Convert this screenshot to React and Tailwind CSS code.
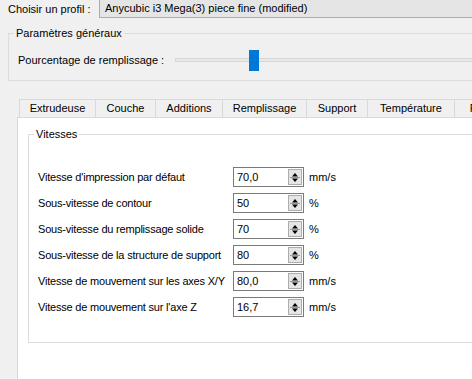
import React from 'react';

const rows = [
    { label: "Vitesse d'impression par défaut", value: '70,0', unit: 'mm/s' },
    { label: 'Sous-vitesse de contour', value: '50', unit: '%' },
    { label: 'Sous-vitesse du remplissage solide', value: '70', unit: '%' },
    { label: 'Sous-vitesse de la structure de support', value: '80', unit: '%' },
    { label: 'Vitesse de mouvement sur les axes X/Y', value: '80,0', unit: 'mm/s' },
    { label: "Vitesse de mouvement sur l'axe Z", value: '16,7', unit: 'mm/s' },
];

const tabs = [
    { name: 'Extrudeuse', w: 'w-[77px]' },
    { name: 'Couche', w: 'w-[60px]' },
    { name: 'Additions', w: 'w-[67px]' },
    { name: 'Remplissage', w: 'w-[84px]' },
    { name: 'Support', w: 'w-[61px]' },
    { name: 'Température', w: 'w-[87px]' },
    { name: 'Refroidissement', w: 'w-[110px]' },
];

function SpinBox({ value }) {
    return (
        <div className="flex h-[20px] w-[71px] items-center justify-between border border-[#7a7a7a] bg-white pl-[3px] pr-[1px]">
            <span className="leading-none">{value}</span>
            <div className="flex h-[16px] w-[14px] flex-col border border-[#acacac] bg-[#e5e5e5]">
                <svg width="12" height="14" viewBox="0 0 12 14">
                    <path d="M6 3 L9 6.5 L3 6.5 Z" fill="#000" />
                    <line x1="1" y1="7.5" x2="11" y2="7.5" stroke="#9a9a9a" />
                    <path d="M3 8.5 L9 8.5 L6 12 Z" fill="#000" />
                </svg>
            </div>
        </div>
    );
}

export default function App() {
    return (
        <div className="h-[379px] w-[472px] overflow-hidden whitespace-nowrap bg-[#f0f0f0] text-[11px] text-black font-['Liberation_Sans',Arial,sans-serif]">
            <div className="flex h-[18px] items-center">
                <span className="w-[99px] shrink-0 pl-[8px]">Choisir un profil :</span>
                <div className="flex h-[18px] flex-1 items-center border-b border-l border-[#adadad] bg-[#e5e5e5] pl-[5px]">
                    Anycubic i3 Mega(3) piece fine (modified)
                </div>
            </div>

            <div className="relative ml-[8px] mr-[-20px] mt-[15px] h-[48px] border border-[#dcdcdc]">
                <span className="absolute left-[5px] top-[-9px] bg-[#f0f0f0] px-[2px] leading-[16px]">Paramètres généraux</span>
                <div className="mt-[16px] flex h-[20px] items-center pl-[9px]">
                    <span className="w-[157px] shrink-0">Pourcentage de remplissage :</span>
                    <div className="relative h-[4px] flex-1 border border-[#d6d6d6] bg-[#e7eae9]">
                        <div className="absolute left-[73px] top-[-9px] h-[21px] w-[10px] bg-[#0078d7]" />
                    </div>
                </div>
            </div>

            <div className="mt-[18px] flex h-[18px] pl-[19px]">
                {tabs.map((t) => (
                    <div key={t.name} className={`${t.w} flex shrink-0 items-center justify-center border-r border-t border-[#d9d9d9] first:border-l`}>
                        {t.name}
                    </div>
                ))}
            </div>

            <div className="ml-[17px] h-[262px] border-l border-t border-[#d9d9d9] bg-white pl-[10px] pt-[16px]">
                <div className="relative mr-[-20px] h-[209px] border border-[#dcdcdc] pl-[9px] pt-[32px]">
                    <span className="absolute left-[5px] top-[-9px] bg-white px-[2px] leading-[16px]">Vitesses</span>
                    <div className="flex flex-col gap-[6px]">
                        {rows.map((r) => (
                            <div key={r.label} className="flex h-[20px] items-center">
                                <span className="w-[195px] shrink-0 tracking-[-0.2px]">{r.label}</span>
                                <SpinBox value={r.value} />
                                <span className="ml-[5px]">{r.unit}</span>
                            </div>
                        ))}
                    </div>
                </div>
            </div>
        </div>
    );
}
